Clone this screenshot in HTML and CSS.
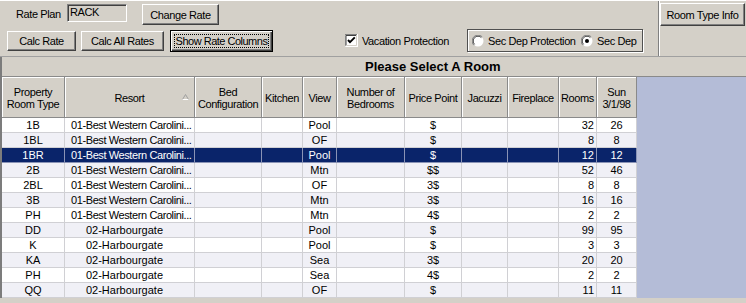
FILE: index.html
```html
<!DOCTYPE html>
<html>
<head>
<meta charset="utf-8">
<link rel="stylesheet" href="styles.css">
</head>
<body>
<div class="toolbar">
  <div class="tb-main">
    <div class="tb-row1">
      <span class="lbl">Rate Plan</span>
      <span class="field">RACK</span>
      <button class="btn btn-change">Change Rate</button>
    </div>
    <div class="tb-row2">
      <button class="btn btn-calc">Calc Rate</button>
      <button class="btn btn-calcall">Calc All Rates</button>
      <button class="btn btn-default"><span class="focus">Show Rate Columns</span></button>
      <span class="check">
        <svg class="box" width="13" height="13" viewBox="0 0 13 13">
          <rect x="0" y="0" width="13" height="13" fill="#fff"/>
          <path d="M0 12.5V0.5H12.5" stroke="#808080" fill="none"/>
          <path d="M1 11.5V1.5H11.5" stroke="#404040" fill="none"/>
          <path d="M0.5 12.5H12.5V0" stroke="#fff" fill="none"/>
          <path d="M1.5 11.5H11.5V1" stroke="#d4d0c8" fill="none"/>
          <path d="M3 6L5 8.2L9.8 3.4" stroke="#000" stroke-width="1.9" fill="none"/>
        </svg>
        <span>Vacation Protection</span>
      </span>
      <div class="radiogroup">
        <svg class="radio" width="12" height="12" viewBox="0 0 12 12">
          <circle cx="6" cy="6" r="5.5" fill="#fff"/>
          <path d="M1.8 10.2A5.5 5.5 0 0 1 10.2 1.8" stroke="#808080" fill="none"/>
          <path d="M2.6 9.4A4.5 4.5 0 0 1 9.4 2.6" stroke="#404040" fill="none"/>
        </svg>
        <span class="rlabel">Sec Dep Protection</span>
        <svg class="radio" width="12" height="12" viewBox="0 0 12 12">
          <circle cx="6" cy="6" r="5.5" fill="#fff"/>
          <path d="M1.8 10.2A5.5 5.5 0 0 1 10.2 1.8" stroke="#808080" fill="none"/>
          <path d="M2.6 9.4A4.5 4.5 0 0 1 9.4 2.6" stroke="#404040" fill="none"/>
          <circle cx="6" cy="6" r="2" fill="#000"/>
        </svg>
        <span>Sec Dep</span>
      </div>
    </div>
  </div>
  <div class="tb-side">
    <button class="btn btn-info">Room Type Info</button>
  </div>
</div>

<div class="grid">
  <div class="caption">Please Select A Room</div>
  <div class="grid-body">
    <div class="rows">
      <div class="row head">
        <div class="hc">Property<br>Room Type</div>
        <div class="hc hc-resort">Resort
          <svg class="sort" width="7" height="6" viewBox="0 0 7 6"><path d="M0.5 5.5L3.5 0.5L6.5 5.5Z" fill="none" stroke="#a0a0a0"/><path d="M0.5 5.5H6.5" stroke="#fff"/></svg>
        </div>
        <div class="hc">Bed<br>Configuration</div>
        <div class="hc">Kitchen</div>
        <div class="hc">View</div>
        <div class="hc">Number of<br>Bedrooms</div>
        <div class="hc">Price Point</div>
        <div class="hc">Jacuzzi</div>
        <div class="hc">Fireplace</div>
        <div class="hc">Rooms</div>
        <div class="hc">Sun<br>3/1/98</div>
      </div>

      <div class="row">
        <div class="c">1B</div><div class="c r-left">01-Best Western Carolini...</div><div class="c"></div><div class="c"></div><div class="c">Pool</div><div class="c"></div><div class="c">$</div><div class="c"></div><div class="c"></div><div class="c r-num">32</div><div class="c">26</div>
      </div>
      <div class="row alt">
        <div class="c">1BL</div><div class="c r-left">01-Best Western Carolini...</div><div class="c"></div><div class="c"></div><div class="c">OF</div><div class="c"></div><div class="c">$</div><div class="c"></div><div class="c"></div><div class="c r-num">8</div><div class="c">8</div>
      </div>
      <div class="row sel">
        <div class="c">1BR</div><div class="c r-left">01-Best Western Carolini...</div><div class="c"></div><div class="c"></div><div class="c">Pool</div><div class="c"></div><div class="c">$</div><div class="c"></div><div class="c"></div><div class="c r-num">12</div><div class="c">12</div>
      </div>
      <div class="row alt">
        <div class="c">2B</div><div class="c r-left">01-Best Western Carolini...</div><div class="c"></div><div class="c"></div><div class="c">Mtn</div><div class="c"></div><div class="c">$$</div><div class="c"></div><div class="c"></div><div class="c r-num">52</div><div class="c">46</div>
      </div>
      <div class="row">
        <div class="c">2BL</div><div class="c r-left">01-Best Western Carolini...</div><div class="c"></div><div class="c"></div><div class="c">OF</div><div class="c"></div><div class="c">3$</div><div class="c"></div><div class="c"></div><div class="c r-num">8</div><div class="c">8</div>
      </div>
      <div class="row alt">
        <div class="c">3B</div><div class="c r-left">01-Best Western Carolini...</div><div class="c"></div><div class="c"></div><div class="c">Mtn</div><div class="c"></div><div class="c">3$</div><div class="c"></div><div class="c"></div><div class="c r-num">16</div><div class="c">16</div>
      </div>
      <div class="row">
        <div class="c">PH</div><div class="c r-left">01-Best Western Carolini...</div><div class="c"></div><div class="c"></div><div class="c">Mtn</div><div class="c"></div><div class="c">4$</div><div class="c"></div><div class="c"></div><div class="c r-num">2</div><div class="c">2</div>
      </div>
      <div class="row alt">
        <div class="c">DD</div><div class="c r-mid">02-Harbourgate</div><div class="c"></div><div class="c"></div><div class="c">Pool</div><div class="c"></div><div class="c">$</div><div class="c"></div><div class="c"></div><div class="c r-num">99</div><div class="c">95</div>
      </div>
      <div class="row">
        <div class="c">K</div><div class="c r-mid">02-Harbourgate</div><div class="c"></div><div class="c"></div><div class="c">Pool</div><div class="c"></div><div class="c">$</div><div class="c"></div><div class="c"></div><div class="c r-num">3</div><div class="c">3</div>
      </div>
      <div class="row alt">
        <div class="c">KA</div><div class="c r-mid">02-Harbourgate</div><div class="c"></div><div class="c"></div><div class="c">Sea</div><div class="c"></div><div class="c">3$</div><div class="c"></div><div class="c"></div><div class="c r-num">20</div><div class="c">20</div>
      </div>
      <div class="row">
        <div class="c">PH</div><div class="c r-mid">02-Harbourgate</div><div class="c"></div><div class="c"></div><div class="c">Sea</div><div class="c"></div><div class="c">4$</div><div class="c"></div><div class="c"></div><div class="c r-num">2</div><div class="c">2</div>
      </div>
      <div class="row alt">
        <div class="c">QQ</div><div class="c r-mid">02-Harbourgate</div><div class="c"></div><div class="c"></div><div class="c">OF</div><div class="c"></div><div class="c">$</div><div class="c"></div><div class="c"></div><div class="c r-num">11</div><div class="c">11</div>
      </div>
    </div>
    <div class="filler"></div>
  </div>
</div>
</body>
</html>
```
FILE: styles.css
```css
html, body {
  margin: 0;
  padding: 0;
}
body {
  width: 746px;
  height: 303px;
  overflow: hidden;
  background: #d4d0c8;
  font-family: "Liberation Sans", Arial, sans-serif;
  font-size: 11px;
  color: #000;
}

/* ---------- toolbar ---------- */
.toolbar {
  display: flex;
  height: 57px;
  box-sizing: border-box;
  border-top: 1px solid #ffffff;
  border-bottom: 1px solid #a0a0a0;
}
.tb-main {
  width: 658px;
  letter-spacing: -0.4px;
}
.tb-row1 {
  display: flex;
  align-items: flex-start;
  padding-top: 3px;
  padding-left: 16px;
  height: 21px;
}
.lbl {
  width: 51px;
  line-height: 18px;
  margin-top: 1px;
}
.field {
  width: 60px;
  height: 18px;
  box-sizing: border-box;
  border: 1px solid;
  border-color: #808080 #ffffff #ffffff #808080;
  box-shadow: inset 1px 1px #404040, inset -1px -1px #d4d0c8;
  padding: 1px 0 0 2px;
  line-height: 13px;
}
.btn {
  box-sizing: border-box;
  font-family: inherit;
  font-size: 11px;
  letter-spacing: -0.4px;
  white-space: nowrap;
  color: #000;
  background: #d4d0c8;
  border: 1px solid;
  border-color: #ffffff #404040 #404040 #ffffff;
  box-shadow: inset -1px -1px #808080;
  padding: 0;
  margin: 0;
  display: flex;
  align-items: center;
  justify-content: center;
}
.btn-change {
  margin-left: 15px;
  width: 77px;
  height: 21px;
}
.tb-row2 {
  display: flex;
  align-items: center;
  margin-top: 4px;
  padding-left: 7px;
  height: 23px;
}
.btn-calc {
  width: 69px;
  height: 20px;
}
.btn-calcall {
  margin-left: 5px;
  width: 83px;
  height: 20px;
}
.btn-default {
  margin-left: 6px;
  width: 103px;
  height: 22px;
  border: 1px solid #000;
  box-shadow: inset 1px 1px #ffffff, inset -1px -1px #404040, inset -2px -2px #808080;
  padding: 3px 3px 3px 3px;
  align-items: stretch;
}
.focus {
  flex: 1;
  border: 1px dotted #000;
  display: flex;
  align-items: center;
  justify-content: center;
  white-space: nowrap;
  letter-spacing: -0.5px;
  overflow: visible;
}
.check {
  display: flex;
  align-items: center;
  margin-left: 72px;
  width: 122px;
}
.box {
  margin-right: 4px;
  flex: none;
}
.radiogroup {
  width: 176px;
  height: 23px;
  box-sizing: border-box;
  border: 1px solid #505050;
  box-shadow: inset 1px 1px #ffffff, 1px 1px #ffffff;
  display: flex;
  align-items: center;
  padding-left: 4px;
}
.radio {
  flex: none;
  margin-right: 4px;
}
.rlabel {
  width: 93px;
}

.tb-side {
  flex: 1;
  border-left: 1px solid #808080;
  box-shadow: inset 1px 0 #ffffff;
  padding: 2px 0 0 1px;
}
.btn-info {
  width: 85px;
  height: 23px;
}

/* ---------- grid ---------- */
.grid {
  border-left: 2px solid #7c7c7c;
}
.caption {
  height: 20px;
  box-sizing: border-box;
  border-bottom: 1px solid #8a8a8a;
  padding-left: 363px;
  font-weight: bold;
  font-size: 13px;
  line-height: 19px;
}
.grid-body {
  display: flex;
}
.rows {
  width: 635px;
}
.filler {
  flex: 1;
  background: #b4bcd7;
}
.row {
  display: grid;
  grid-template-columns: 63px 130px 67px 41px 34px 68px 57px 46px 51px 38px 40px;
  background: #ffffff;
}
.row.alt {
  background: #f0f0f6;
}
.row.sel {
  background: #0a246a;
  color: #ffffff;
}
.head {
  background: #d4d0c8;
  letter-spacing: -0.4px;
}
.hc {
  height: 41px;
  box-sizing: border-box;
  border-right: 1px solid #8a8a8a;
  border-bottom: 1px solid #8a8a8a;
  box-shadow: inset 1px 1px #ffffff;
  display: flex;
  align-items: center;
  justify-content: center;
  text-align: center;
  line-height: 12px;
  padding-top: 1px;
}
.hc-resort {
  position: relative;
}
.sort {
  position: absolute;
  right: 5px;
  top: 17px;
}
.c {
  height: 15px;
  box-sizing: border-box;
  border-right: 1px solid #d0d0d4;
  border-bottom: 1px solid #d0d0d4;
  line-height: 14px;
  text-align: center;
  white-space: nowrap;
  overflow: hidden;
}
.sel .c {
  border-color: #8a93b5;
}
.r-left {
  text-align: left;
  padding-left: 6px;
  letter-spacing: -0.4px;
}
.r-mid {
  padding-right: 10px;
}
.r-num {
  text-align: right;
  padding-right: 2px;
}
```
